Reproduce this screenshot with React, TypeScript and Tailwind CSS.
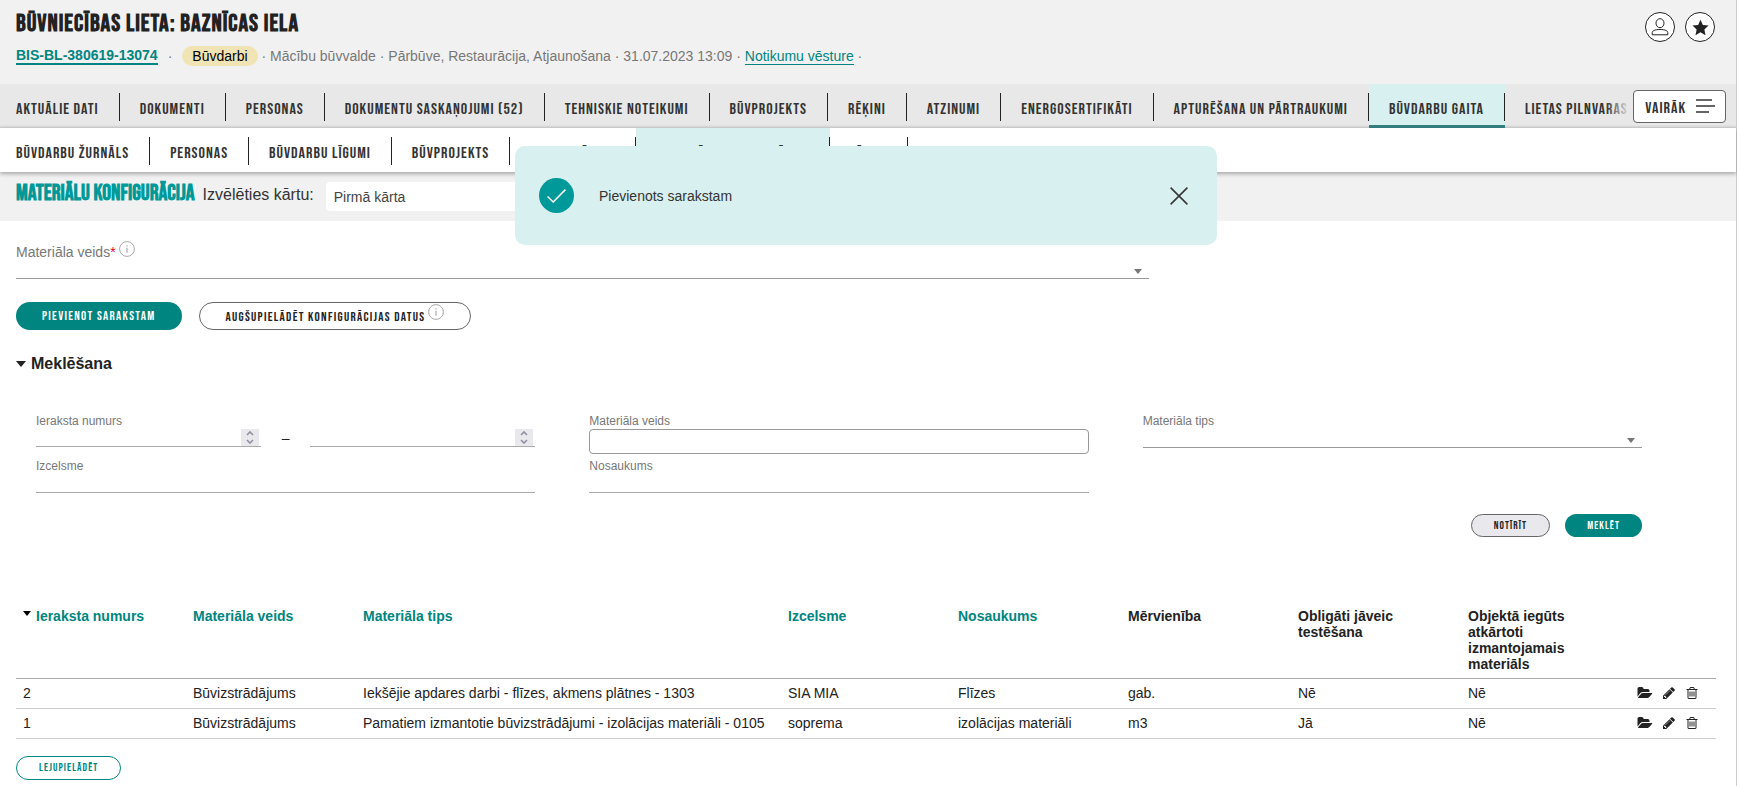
import { ReactNode, useState } from "react";

const MAIN_TABS = [
  "Aktuālie dati",
  "Dokumenti",
  "Personas",
  "Dokumentu saskaņojumi (52)",
  "Tehniskie noteikumi",
  "Būvprojekts",
  "Rēķini",
  "Atzinumi",
  "Energosertifikāti",
  "Apturēšana un pārtraukumi",
  "Būvdarbu gaita",
  "Lietas pilnvaras",
];

const SUB_TABS = [
  "Būvdarbu žurnāls",
  "Personas",
  "Būvdarbu līgumi",
  "Būvprojekts",
  "Apliecinājumi",
  "Materiālu konfigurācija",
  "Tāmes",
];

const COLUMNS = [
  { label: "Ieraksta numurs", sortable: true, sorted: true, width: "w-[10%]" },
  { label: "Materiāla veids", sortable: true, width: "w-[10%]" },
  { label: "Materiāla tips", sortable: true, width: "w-[25%]" },
  { label: "Izcelsme", sortable: true, width: "w-[10%]" },
  { label: "Nosaukums", sortable: true, width: "w-[10%]" },
  { label: "Mērvienība", width: "w-[10%]" },
  { label: "Obligāti jāveic testēšana", width: "w-[10%]" },
  { label: "Objektā iegūts atkārtoti izmantojamais materiāls", width: "w-[10%]" },
];

const ROWS = [
  ["2", "Būvizstrādājums", "Iekšējie apdares darbi - flīzes, akmens plātnes - 1303", "SIA MIA", "Flīzes", "gab.", "Nē", "Nē"],
  ["1", "Būvizstrādājums", "Pamatiem izmantotie būvizstrādājumi - izolācijas materiāli - 0105", "soprema", "izolācijas materiāli", "m3", "Jā", "Nē"],
];

// Icons

function InfoIcon() {
  return (
    <svg className="h-4 w-4 shrink-0 text-[#aaa]" viewBox="0 0 16 16" fill="none" stroke="currentColor" aria-hidden="true">
      <circle cx="8" cy="8" r="7.4" />
      <path d="M8 6.8v5M8 4.2v1.4" strokeWidth="1.2" />
    </svg>
  );
}

function Caret({ className }: { className: string }) {
  return (
    <svg className={className} viewBox="0 0 10 6" fill="currentColor" aria-hidden="true">
      <path d="M0 0h10L5 6z" />
    </svg>
  );
}

function FolderOpenIcon() {
  return (
    <svg className="h-[14px] w-4" viewBox="0 0 1920 1792" fill="currentColor" aria-hidden="true">
      <path d="M1879 952q0 31-31 66l-336 396q-43 51-120.5 86.5t-143.5 35.5h-1088q-34 0-60.5-13t-26.5-43q0-31 31-66l336-396q43-51 120.5-86.5t143.5-35.5h1088q34 0 60.5 13t26.5 43zm-343-344v160h-832q-94 0-197 47.5t-164 119.5l-337 396-5 6q0-4-.5-12.5t-.5-12.5v-960q0-92 66-158t158-66h320q92 0 158 66t66 158v32h544q92 0 158 66t66 158z" />
    </svg>
  );
}

function PencilIcon() {
  return (
    <svg className="h-[14px] w-[14px]" viewBox="0 0 1792 1792" fill="currentColor" aria-hidden="true">
      <path d="M491 1536l91-91-235-235-91 91v107h128v128h107zm523-928q0-22-22-22-10 0-17 7l-542 542q-7 7-7 17 0 22 22 22 10 0 17-7l542-542q7-7 7-17zm-54-192l416 416-832 832h-416v-416zm683 96q0 53-37 90l-166 166-416-416 166-165q36-38 90-38 53 0 91 38l235 234q37 39 37 91z" />
    </svg>
  );
}

function TrashIcon() {
  return (
    <svg className="h-[14px] w-[14px]" viewBox="0 0 1792 1792" fill="currentColor" aria-hidden="true">
      <path d="M704 736v576q0 14-9 23t-23 9h-64q-14 0-23-9t-9-23v-576q0-14 9-23t23-9h64q14 0 23 9t9 23zm256 0v576q0 14-9 23t-23 9h-64q-14 0-23-9t-9-23v-576q0-14 9-23t23-9h64q14 0 23 9t9 23zm256 0v576q0 14-9 23t-23 9h-64q-14 0-23-9t-9-23v-576q0-14 9-23t23-9h64q14 0 23 9t9 23zm128 724v-948h-896v948q0 22 7 40.5t14.5 27 10.5 8.5h832q3 0 10.5-8.5t14.5-27 7-40.5zm-672-1076h448l-48-117q-7-9-17-11h-317q-10 2-17 11zm928 32v64q0 14-9 23t-23 9h-96v948q0 83-47 143.5t-113 60.5h-832q-66 0-113-58.5t-47-141.5v-952h-96q-14 0-23-9t-9-23v-64q0-14 9-23t23-9h309l70-167q15-37 54-63t79-26h320q40 0 79 26t54 63l70 167h309q14 0 23 9t9 23z" />
    </svg>
  );
}

// Navigation

interface TabBarProps {
  label: string;
  tabs: string[];
  active: string;
  activeClass: string;
}

function TabBar({ label, tabs, active, activeClass }: TabBarProps) {
  return (
    <nav aria-label={label} className="flex h-11 min-w-0 flex-1 overflow-hidden">
      {tabs.map((tab, i) => (
        <a
          key={tab}
          href="#"
          className={`flex shrink-0 items-center pt-[2px] ${tab === active ? activeClass : ""}`}
        >
          <span
            className={`flex h-7 items-center border-r border-[#222] pt-[5px] pr-5 font-['Bebas_Neue','Oswald',sans-serif] text-base leading-4 tracking-[1px] whitespace-nowrap text-[#333] uppercase ${
              i === 0 ? "pl-4" : "pl-5"
            }`}
          >
            {tab}
          </span>
        </a>
      ))}
    </nav>
  );
}

// Form fields

interface FieldProps {
  id: string;
  label: string;
  children: ReactNode;
}

function Field({ id, label, children }: FieldProps) {
  return (
    <div className="min-w-0">
      <label htmlFor={id} className="block text-xs leading-[15px] text-[#777]">
        {label}
      </label>
      {children}
    </div>
  );
}

function NumberInput({ id, label }: { id: string; label?: string }) {
  return (
    <div className="relative min-w-0 flex-1">
      <input
        id={id}
        type="number"
        aria-label={label}
        className="block h-[18px] w-full appearance-none border-b border-[#aaa] bg-transparent pr-6 text-sm outline-none [-moz-appearance:textfield] [&::-webkit-inner-spin-button]:hidden"
      />
      <span className="pointer-events-none absolute right-[2px] bottom-px flex h-[17px] w-[18px] items-center justify-center bg-[#e9e9ed] text-[#8f8f9d]">
        <svg className="h-[13px] w-2" viewBox="0 0 8 13" fill="none" stroke="currentColor" strokeWidth="1.6" aria-hidden="true">
          <path d="M1 4l3-3 3 3M1 9l3 3 3-3" />
        </svg>
      </span>
    </div>
  );
}

export default function App() {
  const [toastOpen, setToastOpen] = useState(true);
  const [searchOpen, setSearchOpen] = useState(true);

  return (
    <div className="relative min-h-screen border-r border-[#ccc] bg-white font-['Liberation_Sans',Arial,sans-serif] text-sm text-[#222]">
      {/* Case header */}
      <header className="flex justify-between bg-[#f1f1f1] px-4 pt-3 pb-[18px]">
        <div>
          <h1 className="font-['Bebas_Neue','Oswald',sans-serif] text-2xl leading-6 font-bold tracking-[1px] uppercase">
            Būvniecības lieta: Baznīcas iela
          </h1>
          <div className="mt-[10px] flex items-center whitespace-pre text-[#777]">
            <a href="#" className="border-b-2 border-[#008580] leading-4 font-bold text-[#008580]">
              BIS-BL-380619-13074
            </a>
            <span className="mx-[10px]">·</span>
            <span className="rounded-full bg-[#f0e4b4] px-[10px] leading-5 text-black">Būvdarbi</span>
            <span> · Mācību būvvalde · Pārbūve, Restaurācija, Atjaunošana · 31.07.2023 13:09 · </span>
            <a href="#" className="border-b border-[#008580] leading-4 text-[#008580]">
              Notikumu vēsture
            </a>
            <span> ·</span>
          </div>
        </div>
        <div className="flex gap-[10px] pr-[5px]">
          <button type="button" aria-label="Profils" className="grid h-[30px] w-[30px] place-items-center rounded-full border border-[#222] bg-white">
            <svg className="h-[18px] w-[18px]" viewBox="0 0 18 18" fill="none" stroke="currentColor" aria-hidden="true">
              <ellipse cx="9" cy="5.2" rx="4" ry="4.5" />
              <path d="M1.2 16.8v-2.3c0-1.6 2.6-3 7.8-3s7.8 1.4 7.8 3v2.3z" />
            </svg>
          </button>
          <button type="button" aria-label="Izlase" className="grid h-[30px] w-[30px] place-items-center rounded-full border border-[#222] bg-white">
            <svg className="h-[17px] w-[17px]" viewBox="0 0 18 18" fill="currentColor" aria-hidden="true">
              <path d="M9 .8l2.5 5.5 6 .7-4.4 4.1 1.2 6L9 14.1l-5.300 3 1.200-6L.5 7l6-.7z" />
            </svg>
          </button>
        </div>
      </header>

      {/* Main tabs */}
      <div className="flex items-center bg-[#e8e8e8] pr-[10px] shadow-[inset_0_-4px_3px_-3px_#c4c4c4]">
        <TabBar
          label="Lieta"
          tabs={MAIN_TABS}
          active="Būvdarbu gaita"
          activeClass="bg-[#d8f0f0] shadow-[inset_0_-3px_#338080]"
        />
        <button type="button" className="relative ml-1 flex h-[33px] items-center gap-[10px] rounded border border-[#666] bg-white pr-[10px] pl-[11px] font-['Bebas_Neue','Oswald',sans-serif] text-base leading-4 tracking-[1px] text-[#333] uppercase">
          <span className="absolute -top-px right-full mr-1 h-8 w-6 bg-linear-to-r from-transparent to-[#e8e8e8]" />
          <span className="pt-[5px]">Vairāk</span>
          <svg className="h-[14px] w-[19px]" viewBox="0 0 19 14" fill="none" stroke="currentColor" strokeWidth="1.4" aria-hidden="true">
            <path d="M0 1h16M0 7h19M0 13h13" />
          </svg>
        </button>
      </div>

      {/* Sub tabs */}
      <div className="relative z-10 flex bg-white shadow-[0_2px_4px_#0000004d]">
        <TabBar label="Būvdarbu gaita" tabs={SUB_TABS} active="Materiālu konfigurācija" activeClass="bg-[#d8f0f0]" />
      </div>

      {/* Page title and stage picker */}
      <div className="flex h-[49px] items-center bg-[#f1f1f1] px-4">
        <h2 className="pb-[6px] font-['Bebas_Neue','Oswald',sans-serif] text-[22px] leading-5 font-bold text-[#099] uppercase">
          Materiālu konfigurācija
        </h2>
        <label htmlFor="stage" className="ml-2 pb-1 text-base leading-5 text-[#333]">
          Izvēlēties kārtu:
        </label>
        <select id="stage" className="ml-3 h-[29px] w-1/4 appearance-none rounded bg-white px-2 text-sm text-[#444]">
          <option>Pirmā kārta</option>
        </select>
      </div>

      <main className="px-4 pr-5 pb-[5px]">
        {/* Add material */}
        <div className="w-2/3 pt-5">
          <div className="flex text-[#777]">
            <label htmlFor="material" className="pt-px pb-[3px] leading-5">
              Materiāla veids<span className="text-[#e0002a]">*</span>
            </label>
            <span className="ml-[3px]">
              <InfoIcon />
            </span>
          </div>
          <div className="relative">
            <select id="material" className="block h-[14px] w-full appearance-none border-b border-[#999] bg-transparent outline-none" />
            <Caret className="pointer-events-none absolute right-[7px] bottom-[5px] h-[5px] w-2 text-[#777]" />
          </div>
        </div>

        <div className="mt-[23px] flex items-center gap-[17px] font-['Bebas_Neue','Oswald',sans-serif] text-[13px] leading-4 tracking-widest uppercase">
          <button type="button" className="h-7 rounded-full bg-[#008580] px-[26px] text-white uppercase">
            Pievienot sarakstam
          </button>
          <button type="button" className="flex h-7 gap-[3px] rounded-full border border-[#666] bg-white px-[26px] pt-px uppercase">
            <span className="pt-[5px]">Augšupielādēt konfigurācijas datus</span>
            <InfoIcon />
          </button>
        </div>

        {/* Search */}
        <button
          type="button"
          aria-expanded={searchOpen}
          onClick={() => setSearchOpen(!searchOpen)}
          className="mt-[22px] flex items-center gap-[5px] text-base leading-6 font-bold"
        >
          <Caret className="h-[6px] w-[10px]" />
          Meklēšana
        </button>
        {searchOpen && (
          <form className="pt-[38px] pr-[74px] pl-5" onSubmit={(e) => e.preventDefault()}>
            <div className="grid grid-cols-3 gap-x-[54px] gap-y-[5px]">
              <Field id="number-from" label="Ieraksta numurs">
                <div className="flex items-center">
                  <NumberInput id="number-from" />
                  <span className="w-[49px] text-center leading-4">–</span>
                  <NumberInput id="number-to" label="Ieraksta numurs līdz" />
                </div>
              </Field>
              <Field id="type" label="Materiāla veids">
                <input id="type" type="text" className="block h-[25px] w-full rounded border border-[#999] px-2" />
              </Field>
              <Field id="kind" label="Materiāla tips">
                <div className="relative">
                  <select id="kind" className="block h-[19px] w-full appearance-none border-b border-[#999] bg-transparent outline-none" />
                  <Caret className="pointer-events-none absolute right-[7px] bottom-[5px] h-[5px] w-2 text-[#777]" />
                </div>
              </Field>
              <Field id="origin" label="Izcelsme">
                <input id="origin" type="text" className="block h-[19px] w-full border-b border-[#aaa] outline-none" />
              </Field>
              <Field id="name" label="Nosaukums">
                <input id="name" type="text" className="block h-[19px] w-full border-b border-[#aaa] outline-none" />
              </Field>
            </div>
            <div className="mt-[21px] flex justify-end gap-[15px] font-['Bebas_Neue','Oswald',sans-serif] text-[11px] leading-4 tracking-widest">
              <button type="reset" className="h-[23px] rounded-full border border-[#666] bg-[#e9e9ed] px-[22px] uppercase">
                Notīrīt
              </button>
              <button type="submit" className="h-[23px] rounded-full bg-[#008580] px-[22px] text-white uppercase">
                Meklēt
              </button>
            </div>
          </form>
        )}

        {/* Results */}
        <table className="mt-[67px] w-full table-fixed text-left">
          <thead>
            <tr className="border-b border-[#aaa] align-top">
              {COLUMNS.map((col) => (
                <th key={col.label} className={`${col.width} pt-1 pr-8 pb-[6px] pl-[7px] leading-4 font-bold`}>
                  {col.sortable ? (
                    <a href="#" className="flex gap-[5px] whitespace-nowrap text-[#008580]">
                      {col.sorted && <Caret className="mt-[3px] h-[5px] w-2 text-black" />}
                      {col.label}
                    </a>
                  ) : (
                    col.label
                  )}
                </th>
              ))}
              <th className="w-[5%]" aria-label="Darbības" />
            </tr>
          </thead>
          <tbody>
            {ROWS.map((row) => (
              <tr key={row[0]} className="h-[30px] border-b border-[#ccc]">
                {row.map((cell, i) => (
                  <td key={i} className="pb-[2px] pl-[7px] leading-5 whitespace-nowrap">
                    {cell}
                  </td>
                ))}
                <td className="pb-[2px]">
                  <div className="flex items-center gap-[9px] pl-[6px]">
                    <a href="#" aria-label="Atvērt">
                      <FolderOpenIcon />
                    </a>
                    <a href="#" aria-label="Labot">
                      <PencilIcon />
                    </a>
                    <a href="#" aria-label="Dzēst">
                      <TrashIcon />
                    </a>
                  </div>
                </td>
              </tr>
            ))}
          </tbody>
        </table>
        <button type="button" className="mt-[17px] h-6 rounded-full border border-[#008580] px-[22px] font-['Bebas_Neue','Oswald',sans-serif] text-[11px] leading-4 tracking-widest text-[#008580] uppercase">
          Lejupielādēt
        </button>
      </main>

      {/* Toast */}
      {toastOpen && (
        <div className="pointer-events-none absolute inset-x-0 top-[146px] z-20 flex justify-center pr-1">
          <div role="status" className="pointer-events-auto flex h-[99px] w-[702px] items-center rounded-[10px] bg-[#d8f0f0] pr-[29px] pl-6">
            <span className="grid h-[35px] w-[35px] place-items-center rounded-full bg-[#099] text-white">
              <svg className="h-[14px] w-[19px]" viewBox="0 0 19 14" fill="none" stroke="currentColor" strokeWidth="1.5" aria-hidden="true">
                <path d="M.6 7.500l5.600 5.500L18.400.6" />
              </svg>
            </span>
            <p className="ml-[25px] flex-1 text-[#333]">Pievienots sarakstam</p>
            <button type="button" aria-label="Aizvērt" onClick={() => setToastOpen(false)}>
              <svg className="h-[18px] w-[18px]" viewBox="0 0 18 18" fill="none" stroke="#333" strokeWidth="1.5" aria-hidden="true">
                <path d="M.6.6l16.800 16.800M17.400.6L.6 17.400" />
              </svg>
            </button>
          </div>
        </div>
      )}
    </div>
  );
}
